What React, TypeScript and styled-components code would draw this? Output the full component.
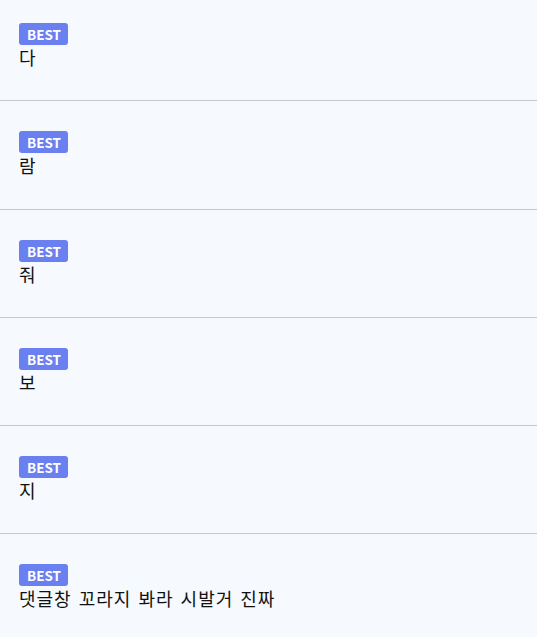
import React from "react";
import styled, { createGlobalStyle } from "styled-components";

const GlobalStyle = createGlobalStyle`
  html, body {
    margin: 0;
    padding: 0;
    background: #f6f9fe;
  }
  body {
    font-family: "Noto Sans CJK KR", "Noto Sans", sans-serif;
    color: #111;
  }
`;

const List = styled.ul`
  list-style: none;
  margin: 0;
  padding: 0;
  background: #f6f9fe;
`;

const Item = styled.li`
  display: flex;
  flex-direction: column;
  align-items: flex-start;
  padding: 30px 19px 30px;
  border-bottom: 1px solid #c5c8cd;

  &:first-child {
    padding-top: 23px;
  }
`;

const Badge = styled.span`
  display: inline-flex;
  align-items: center;
  justify-content: center;
  height: 22px;
  padding: 0 7px 0 8px;
  box-sizing: border-box;
  border-radius: 3px;
  background: #6a7ff0;
  color: #fff;
  font-family: "Noto Sans CJK KR", "Noto Sans", sans-serif;
  font-weight: 700;
  font-size: 13.5px;
  line-height: 22px;
`;

const Comment = styled.p`
  margin: 0;
  font-size: 18px;
  line-height: 25.3px;
  letter-spacing: 1px;
  word-spacing: 2px;
  color: #111;
`;

const comments = ["다", "람", "줘", "보", "지", "댓글창 꼬라지 봐라 시발거 진짜"];

export default function App() {
  return (
    <>
      <GlobalStyle />
      <List>
        {comments.map((c, i) => (
          <Item key={i}>
            <Badge>BEST</Badge>
            <Comment>{c}</Comment>
          </Item>
        ))}
      </List>
    </>
  );
}
